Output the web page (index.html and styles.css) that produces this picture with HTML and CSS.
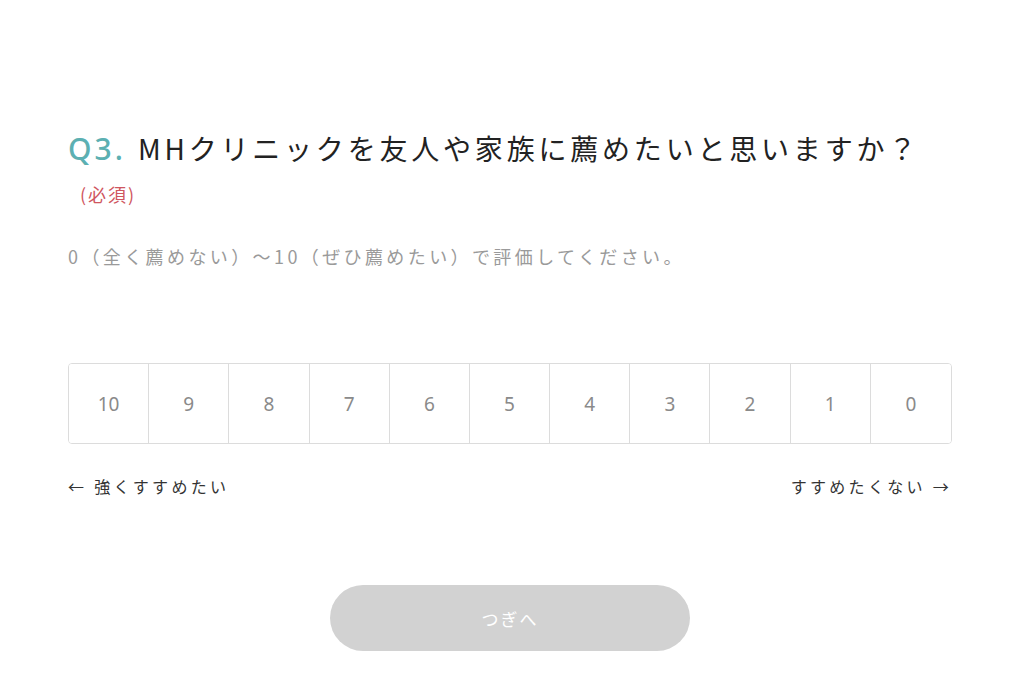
FILE: index.html
```html
<!DOCTYPE html>
<html lang="ja">
<head>
  <meta charset="UTF-8" />
  <meta name="viewport" content="width=device-width, initial-scale=1.0"/>
  <title>アンケート Q3</title>
  <link rel="stylesheet" href="styles.css">
</head>
<body>
  <main class="question">
    <h2 class="question-title"><span class="q-num">Q3.</span> MHクリニックを友人や家族に薦めたいと思いますか？</h2>
    <p class="required">(必須)</p>
    <p class="hint">0（全く薦めない）〜10（ぜひ薦めたい）で評価してください。</p>

    <div class="scale">
      <button class="scale-item">10</button>
      <button class="scale-item">9</button>
      <button class="scale-item">8</button>
      <button class="scale-item">7</button>
      <button class="scale-item">6</button>
      <button class="scale-item">5</button>
      <button class="scale-item">4</button>
      <button class="scale-item">3</button>
      <button class="scale-item">2</button>
      <button class="scale-item">1</button>
      <button class="scale-item">0</button>
    </div>

    <div class="scale-labels">
      <span>← 強くすすめたい</span>
      <span>すすめたくない →</span>
    </div>

    <div class="actions">
      <button class="next" disabled>つぎへ</button>
    </div>
  </main>
</body>
</html>
```

FILE: styles.css
```css
:root {
  --teal: #5cb0b2;
  --red: #cf5660;
  --text-dark: #222222;
  --text-muted: #9a9a9a;
  --border: #dcdcdc;
  --disabled: #d2d2d2;
}

* {
  box-sizing: border-box;
}

body {
  margin: 0;
  background: #ffffff;
  color: var(--text-dark);
  font-family: "Noto Sans CJK JP", "Noto Sans", sans-serif;
}

.question {
  width: 884px;
  margin-left: 68px;
  padding-top: 128px;
}

.question-title {
  margin: 0;
  font-size: 28px;
  line-height: 40px;
  font-weight: 400;
  letter-spacing: 3.8px;
}

.q-num {
  color: var(--teal);
  font-family: "Noto Sans", sans-serif;
  font-size: 30px;
  font-weight: 500;
  letter-spacing: 3px;
  margin-right: 2px;
}

.required {
  margin: 13px 0 0 12px;
  font-size: 18px;
  line-height: 24px;
  letter-spacing: 2px;
  color: var(--red);
}

.hint {
  margin: 37px 0 0;
  font-size: 18px;
  line-height: 26px;
  letter-spacing: 3.4px;
  color: var(--text-muted);
}

.scale {
  display: grid;
  grid-template-columns: repeat(11, 1fr);
  height: 81px;
  margin-top: 94px;
  border: 1px solid var(--border);
  border-radius: 4px;
  overflow: hidden;
}

.scale-item {
  border: none;
  border-right: 1px solid var(--border);
  background: #ffffff;
  font-family: "Noto Sans", sans-serif;
  font-size: 19px;
  color: #8a8a8a;
  cursor: pointer;
}

.scale-item:last-child {
  border-right: none;
}

.scale-labels {
  display: flex;
  justify-content: space-between;
  margin-top: 30px;
  font-size: 16px;
  line-height: 24px;
  letter-spacing: 3.3px;
  color: #333333;
}

.actions {
  display: flex;
  justify-content: center;
  margin-top: 87px;
}

.next {
  width: 360px;
  height: 66px;
  border: none;
  border-radius: 33px;
  background: var(--disabled);
  color: #ffffff;
  font-family: "Noto Sans CJK JP", sans-serif;
  font-size: 17px;
  letter-spacing: 2px;
}
```
